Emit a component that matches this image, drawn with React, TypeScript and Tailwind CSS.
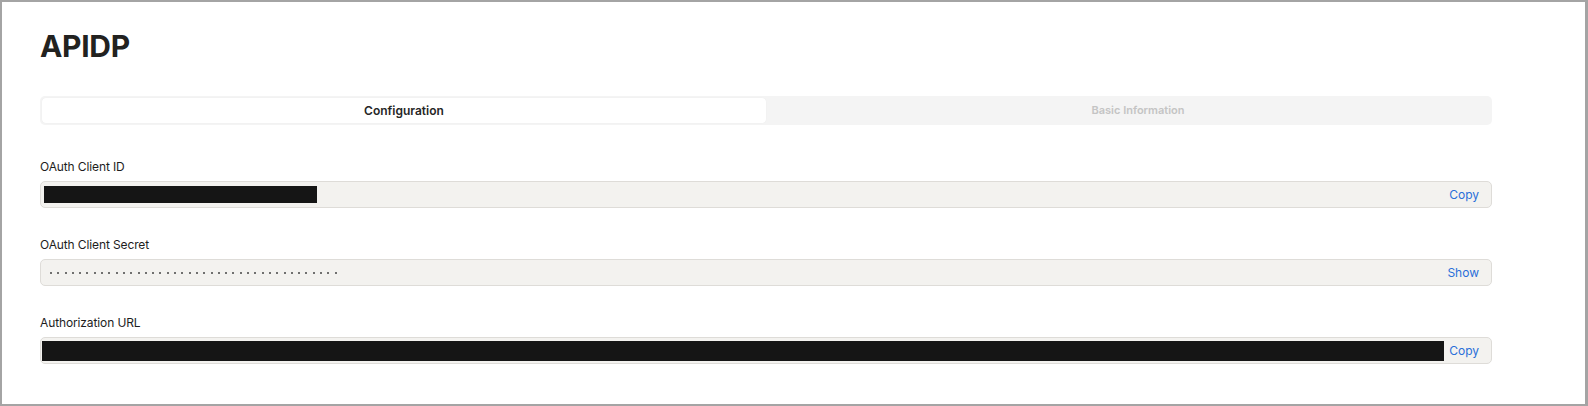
import React from "react";

function Field({ label, children, action }: { label: string; children: React.ReactNode; action: string }) {
  return (
    <div className="flex flex-col">
      <div className="h-4 text-[12px] leading-4 tracking-[-0.01em] text-[#1d1d1d]">{label}</div>
      <div className="mt-[6px] flex h-[27px] items-center rounded-[5px] border border-[#dedcd8] bg-[#f3f2ef] pr-[12px]">
        <div className="flex min-w-0 flex-1 items-center">{children}</div>
        <button className="ml-[5px] text-[12px] leading-4 text-[#2a6fd9]">{action}</button>
      </div>
    </div>
  );
}

export default function App() {
  const dots = Array.from({ length: 40 });
  return (
    <div
      className="h-[406px] w-[1588px] overflow-hidden border-2 border-r-[3px] border-[#a4a4a4] bg-white pl-[38px] pt-[26px]"
      style={{ fontFamily: "Inter, 'Noto Sans', sans-serif" }}
    >
      <div className="w-[1452px]">
        <h1 className="text-[30px] font-bold leading-9 tracking-[-0.01em] text-[#222220]">APIDP</h1>
        <div className="mt-8 grid h-[29px] grid-cols-2 rounded-[5px] bg-[#f4f4f4] p-[2px]">
          <div className="flex items-center justify-center rounded-[4px] bg-white text-[12px] font-semibold text-[#262626] shadow-[0_0_1px_rgba(0,0,0,0.08)]">
            Configuration
          </div>
          <div className="flex items-center justify-center text-[11px] font-semibold text-[#c4c4c4]">
            <span className="ml-[20px]">Basic Information</span>
          </div>
        </div>
        <div className="mt-[34px] flex flex-col gap-[29px]">
          <Field label="OAuth Client ID" action="Copy">
            <div className="ml-[3px] h-[17px] w-[273px] bg-[#151515]" />
          </Field>
          <Field label="OAuth Client Secret" action="Show">
            <div className="ml-[9px] flex items-center gap-[5.3px]">
              {dots.map((_, i) => (
                <span key={i} className="h-[2px] w-[2px] rounded-full bg-[#454545]" />
              ))}
            </div>
          </Field>
          <Field label="Authorization URL" action="Copy">
            <div className="ml-[1px] h-[20px] flex-1 bg-[#151515]" />
          </Field>
        </div>
      </div>
    </div>
  );
}
